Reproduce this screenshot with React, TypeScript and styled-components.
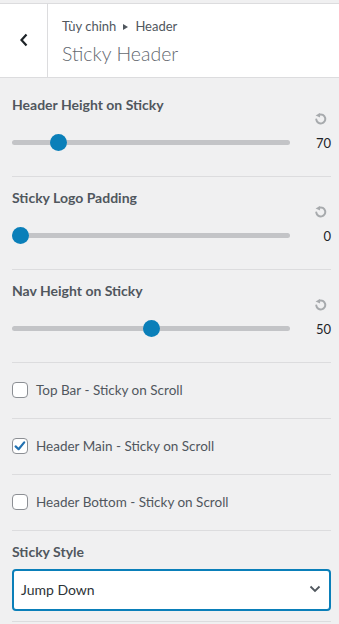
import React from "react";
import styled, { createGlobalStyle } from "styled-components";

const FONT = `Lato, "Open Sans", sans-serif`;

const Global = createGlobalStyle`
  html, body { margin: 0; padding: 0; background: #f0f0f1; }
  body { font-family: ${FONT}; -webkit-font-smoothing: antialiased; }
  * { box-sizing: border-box; }
`;

const Page = styled.div`
  width: 339px;
  height: 624px;
  overflow: hidden;
  background: #f0f0f1;
  padding-top: 3px;
`;

const Header = styled.header`
  display: flex;
  height: 75px;
  background: #fff;
  border-top: 1px solid #dcdcde;
  border-bottom: 1px solid #dcdcde;
`;

const BackButton = styled.button`
  width: 48px;
  flex: none;
  border: none;
  border-right: 1px solid #dcdcde;
  background: #fff;
  padding: 0 0 2px 0;
  display: flex;
  align-items: center;
  justify-content: center;
  color: #1d2327;
  cursor: pointer;
`;

const TitleBox = styled.div`
  display: flex;
  flex-direction: column;
  padding: 12px 0 0 14px;
`;

const Crumb = styled.div`
  font-size: 13px;
  line-height: 20px;
  color: #50575e;
  display: flex;
  align-items: center;
  gap: 6px;
`;

const CrumbArrow = styled.span`
  width: 0;
  height: 0;
  border-top: 3.5px solid transparent;
  border-bottom: 3.5px solid transparent;
  border-left: 5px solid #50575e;
  margin: 1px 1px 0 1px;
`;

const Title = styled.h1`
  margin: 4px 0 0 0;
  font-size: 19.5px;
  line-height: 28px;
  font-weight: 300;
  color: #646970;
`;

const List = styled.div`
  padding: 5px 8px 0 12px;
`;

const Section = styled.div<{ $pt?: number; $pb?: number }>`
  padding-top: ${(p) => p.$pt ?? 11}px;
  padding-bottom: ${(p) => p.$pb ?? 24}px;
  border-bottom: 1px solid #dcdcde;
`;

const Label = styled.div`
  font-size: 14px;
  line-height: 20px;
  font-weight: 700;
  color: #50575e;
`;

const ResetRow = styled.div`
  display: flex;
  justify-content: flex-end;
  height: 16px;
  margin-top: -4px;
  padding-right: 4px;
  align-items: center;
`;

const ResetButton = styled.span`
  display: flex;
  width: 12px;
  height: 12px;
`;

const SliderRow = styled.div`
  display: flex;
  align-items: center;
  height: 20px;
  margin-top: 5px;
`;

const Track = styled.div`
  position: relative;
  width: 278px;
  height: 5px;
  border-radius: 3px;
  background: #c3c4c7;
  flex: none;
`;

const Thumb = styled.span`
  position: absolute;
  top: 50%;
  width: 17px;
  height: 17px;
  margin-top: -8.5px;
  border-radius: 50%;
  background: #0a7fb9;
`;

const Value = styled.span`
  flex: 1;
  text-align: right;
  font-size: 13px;
  color: #1d2327;
  padding-top: 1px;
`;

const CheckRow = styled.label`
  display: flex;
  align-items: center;
  gap: 8px;
  font-size: 13.5px;
  line-height: 20px;
  color: #50575e;
`;

const Box = styled.span`
  width: 16px;
  height: 16px;
  flex: none;
  border: 1px solid #8c8f94;
  border-radius: 4px;
  background: #fff;
  display: flex;
  align-items: center;
  justify-content: center;
`;

const SelectBox = styled.div`
  margin-top: 7px;
  height: 42px;
  border: 2px solid #0a7fb9;
  border-radius: 4px;
  background: #fff;
  display: flex;
  align-items: center;
  justify-content: space-between;
  padding: 0 8px 2px 7px;
  font-size: 14px;
  color: #2c3338;
`;

const Reset = () => (
  <ResetButton>
    <svg width="12" height="12" viewBox="0 0 12 12" fill="none">
      <path d="M4.3 1.7 A4.5 4.5 0 1 1 1.3 6.6" stroke="#a7aaad" strokeWidth="2" strokeLinecap="round" />
      <path d="M0.6 2.4 L4.9 0.1 L5.1 4.5 Z" fill="#a7aaad" />
    </svg>
  </ResetButton>
);

type SliderProps = { label: string; value: number; max: number; first?: boolean };

const Slider = ({ label, value, max, first }: SliderProps) => (
  <Section $pt={first ? 12 : 11}>
    <Label>{label}</Label>
    <ResetRow>
      <Reset />
    </ResetRow>
    <SliderRow>
      <Track>
        <Thumb style={{ left: `calc((100% - 17px) * ${value / max})` }} />
      </Track>
      <Value>{value}</Value>
    </SliderRow>
  </Section>
);

const Check = ({ label, checked }: { label: string; checked?: boolean }) => (
  <Section $pt={17} $pb={18}>
    <CheckRow>
      <Box>
        {checked && (
          <svg width="14" height="14" viewBox="0 0 14 14" fill="none">
            <path d="M2.6 7.4 L5.6 10.2 L11.2 3.4" stroke="#2271b1" strokeWidth="2.2" strokeLinecap="round" strokeLinejoin="round" />
          </svg>
        )}
      </Box>
      {label}
    </CheckRow>
  </Section>
);

export default function App() {
  return (
    <Page>
      <Global />
      <Header>
        <BackButton aria-label="Back">
          <svg width="10" height="14" viewBox="0 0 10 14" fill="none">
            <path d="M7.5 1.5 L2.5 7 L7.5 12.5" stroke="#1d2327" strokeWidth="2.2" />
          </svg>
        </BackButton>
        <TitleBox>
          <Crumb>
            Tùy chỉnh <CrumbArrow /> Header
          </Crumb>
          <Title>Sticky Header</Title>
        </TitleBox>
      </Header>
      <List>
        <Slider label="Header Height on Sticky" value={70} max={475} first />
        <Slider label="Sticky Logo Padding" value={0} max={100} />
        <Slider label="Nav Height on Sticky" value={50} max={100} />
        <Check label="Top Bar - Sticky on Scroll" />
        <Check label="Header Main - Sticky on Scroll" checked />
        <Check label="Header Bottom - Sticky on Scroll" />
        <Section $pt={11} $pb={10}>
          <Label>Sticky Style</Label>
          <SelectBox>
            Jump Down
            <svg width="12" height="8" viewBox="0 0 12 8" fill="none">
              <path d="M1.5 1.5 L6 6 L10.5 1.5" stroke="#50575e" strokeWidth="1.8" />
            </svg>
          </SelectBox>
        </Section>
      </List>
    </Page>
  );
}
